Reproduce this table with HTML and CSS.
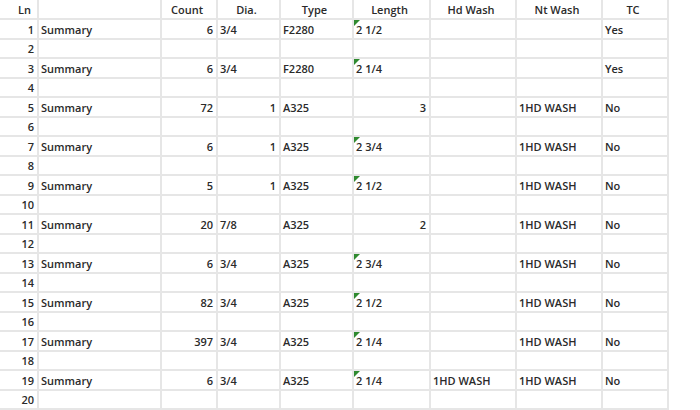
FILE: index.html
```html
<!DOCTYPE html>
<html>
<head>
<meta charset="utf-8">
<link rel="stylesheet" href="styles.css">
</head>
<body>
<div class="sheet">
  <div class="cell hd ln">Ln</div><div class="cell hd"></div><div class="cell hd c">Count</div><div class="cell hd c">Dia.</div><div class="cell hd c">Type</div><div class="cell hd c">Length</div><div class="cell hd c">Hd Wash</div><div class="cell hd c">Nt Wash</div><div class="cell hd c">TC</div>

  <div class="cell r">1</div><div class="cell">Summary</div><div class="cell r">6</div><div class="cell">3/4</div><div class="cell">F2280</div><div class="cell txt">2 1/2</div><div class="cell"></div><div class="cell"></div><div class="cell">Yes</div>
  <div class="cell r">2</div><div class="cell"></div><div class="cell"></div><div class="cell"></div><div class="cell"></div><div class="cell"></div><div class="cell"></div><div class="cell"></div><div class="cell"></div>
  <div class="cell r">3</div><div class="cell">Summary</div><div class="cell r">6</div><div class="cell">3/4</div><div class="cell">F2280</div><div class="cell txt">2 1/4</div><div class="cell"></div><div class="cell"></div><div class="cell">Yes</div>
  <div class="cell r">4</div><div class="cell"></div><div class="cell"></div><div class="cell"></div><div class="cell"></div><div class="cell"></div><div class="cell"></div><div class="cell"></div><div class="cell"></div>
  <div class="cell r">5</div><div class="cell">Summary</div><div class="cell r">72</div><div class="cell r">1</div><div class="cell">A325</div><div class="cell r">3</div><div class="cell"></div><div class="cell">1HD WASH</div><div class="cell">No</div>
  <div class="cell r">6</div><div class="cell"></div><div class="cell"></div><div class="cell"></div><div class="cell"></div><div class="cell"></div><div class="cell"></div><div class="cell"></div><div class="cell"></div>
  <div class="cell r">7</div><div class="cell">Summary</div><div class="cell r">6</div><div class="cell r">1</div><div class="cell">A325</div><div class="cell txt">2 3/4</div><div class="cell"></div><div class="cell">1HD WASH</div><div class="cell">No</div>
  <div class="cell r">8</div><div class="cell"></div><div class="cell"></div><div class="cell"></div><div class="cell"></div><div class="cell"></div><div class="cell"></div><div class="cell"></div><div class="cell"></div>
  <div class="cell r">9</div><div class="cell">Summary</div><div class="cell r">5</div><div class="cell r">1</div><div class="cell">A325</div><div class="cell txt">2 1/2</div><div class="cell"></div><div class="cell">1HD WASH</div><div class="cell">No</div>
  <div class="cell r">10</div><div class="cell"></div><div class="cell"></div><div class="cell"></div><div class="cell"></div><div class="cell"></div><div class="cell"></div><div class="cell"></div><div class="cell"></div>
  <div class="cell r">11</div><div class="cell">Summary</div><div class="cell r">20</div><div class="cell">7/8</div><div class="cell">A325</div><div class="cell r">2</div><div class="cell"></div><div class="cell">1HD WASH</div><div class="cell">No</div>
  <div class="cell r">12</div><div class="cell"></div><div class="cell"></div><div class="cell"></div><div class="cell"></div><div class="cell"></div><div class="cell"></div><div class="cell"></div><div class="cell"></div>
  <div class="cell r">13</div><div class="cell">Summary</div><div class="cell r">6</div><div class="cell">3/4</div><div class="cell">A325</div><div class="cell txt">2 3/4</div><div class="cell"></div><div class="cell">1HD WASH</div><div class="cell">No</div>
  <div class="cell r">14</div><div class="cell"></div><div class="cell"></div><div class="cell"></div><div class="cell"></div><div class="cell"></div><div class="cell"></div><div class="cell"></div><div class="cell"></div>
  <div class="cell r">15</div><div class="cell">Summary</div><div class="cell r">82</div><div class="cell">3/4</div><div class="cell">A325</div><div class="cell txt">2 1/2</div><div class="cell"></div><div class="cell">1HD WASH</div><div class="cell">No</div>
  <div class="cell r">16</div><div class="cell"></div><div class="cell"></div><div class="cell"></div><div class="cell"></div><div class="cell"></div><div class="cell"></div><div class="cell"></div><div class="cell"></div>
  <div class="cell r">17</div><div class="cell">Summary</div><div class="cell r">397</div><div class="cell">3/4</div><div class="cell">A325</div><div class="cell txt">2 1/4</div><div class="cell"></div><div class="cell">1HD WASH</div><div class="cell">No</div>
  <div class="cell r">18</div><div class="cell"></div><div class="cell"></div><div class="cell"></div><div class="cell"></div><div class="cell"></div><div class="cell"></div><div class="cell"></div><div class="cell"></div>
  <div class="cell r">19</div><div class="cell">Summary</div><div class="cell r">6</div><div class="cell">3/4</div><div class="cell">A325</div><div class="cell txt">2 1/4</div><div class="cell">1HD WASH</div><div class="cell">1HD WASH</div><div class="cell">No</div>
  <div class="cell r">20</div><div class="cell"></div><div class="cell"></div><div class="cell"></div><div class="cell"></div><div class="cell"></div><div class="cell"></div><div class="cell"></div><div class="cell"></div>
</div>
</body>
</html>
```

FILE: styles.css
```css
html, body {
  margin: 0;
  padding: 0;
  background: #ffffff;
}

.sheet {
  display: grid;
  grid-template-columns: 39px 123px 56px 63px 73px 77px 86px 86px 66px;
  grid-template-rows: 20px repeat(20, 19.5px);
  width: 669px;
  font-family: "Open Sans", "Noto Sans", sans-serif;
  font-size: 11px;
  font-weight: 600;
  color: #2a2a2a;
}

.cell {
  position: relative;
  box-sizing: border-box;
  border-right: 2px solid #e6e6e6;
  border-bottom: 2px solid #e6e6e6;
  display: flex;
  align-items: flex-end;
  justify-content: flex-start;
  padding: 0 2px 2px 2px;
  line-height: 13px;
  white-space: nowrap;
  overflow: hidden;
}

.cell.r {
  justify-content: flex-end;
  padding-right: 3px;
}

.cell.c {
  justify-content: center;
  padding-right: 6px;
}

.cell.ln {
  padding-left: 18px;
}

.cell.txt::before {
  content: "";
  position: absolute;
  left: 0;
  top: 0;
  width: 0;
  height: 0;
  border-top: 6px solid #2f8a2f;
  border-right: 6px solid transparent;
}
```
